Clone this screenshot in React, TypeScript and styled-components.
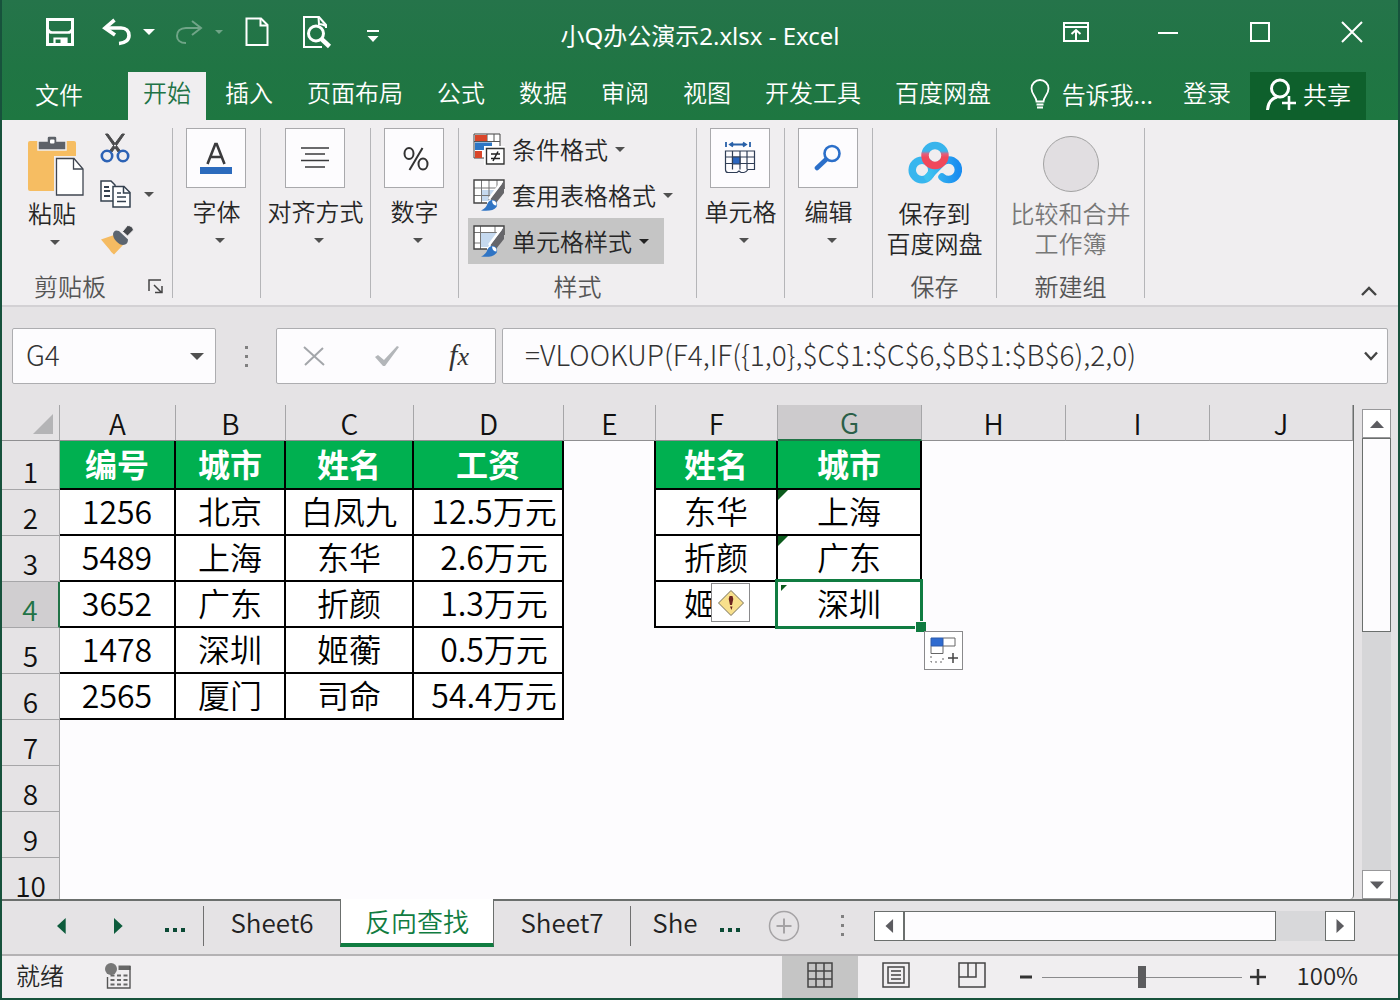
import React, { useState } from "react";
import styled, { createGlobalStyle, css } from "styled-components";

const FONT = '"Noto Sans CJK SC", "Noto Sans", sans-serif';

const C = {
  green: "#217346",
  accent: "#107c41",
  header: "#00b050",
  frame: "#17523c",
  ribbon: "#f0eef0",
  chrome: "#e5e3e5",
  pressed: "#c5c5c5",
  sheet: "#fdfcfe",
  line: "#a6a6a8",
  edge: "#6b6f6d",
  text: "#262626",
  muted: "#777777",
};

const GlobalStyle = createGlobalStyle`
  *, *::before, *::after { box-sizing: border-box; }
  body { margin: 0; background: ${C.chrome}; font-family: ${FONT}; font-weight: 350; color: ${C.text}; }
  button, input { font: inherit; color: inherit; margin: 0; }
  button { padding: 0; border: 0; background: none; }
  svg { display: block; flex: none; }
`;

const Window = styled.div`
  display: flex;
  flex-direction: column;
  height: 100vh;
  min-width: 1200px;
  overflow: hidden;
  border: 2px solid ${C.frame};
  border-top: 0;
`;

/* ---------- title bar and ribbon tabs ---------- */

const Header = styled.header`
  color: #fff;
  background: linear-gradient(#25744a, #207544 55%, #1e7741);
`;

const TitleBar = styled.div`
  display: grid;
  grid-template-columns: 1fr auto 1fr;
  align-items: center;
  height: 72px;
  padding-bottom: 8px;
`;

const QuickBar = styled.div`
  display: flex;
  align-items: center;
  padding-left: 42px;
`;

const QuickButton = styled.button<{ $w: number; $gap?: number; $dim?: boolean }>`
  display: flex;
  align-items: center;
  justify-content: center;
  width: ${(p) => p.$w}px;
  height: 40px;
  margin-right: ${(p) => p.$gap ?? 0}px;
  opacity: ${(p) => (p.$dim ? 0.35 : 1)};
`;

const Title = styled.h1`
  margin: 8px 0 0;
  font-family: "Noto Sans", "Noto Sans CJK SC", sans-serif;
  font-size: 24px;
  line-height: 32px;
  font-weight: 400;
`;

const WindowButtons = styled.div`
  display: flex;
  justify-content: flex-end;
`;

const WindowButton = styled.button`
  display: flex;
  align-items: center;
  justify-content: center;
  width: 92px;
  height: 40px;
`;

const TabRow = styled.nav`
  display: flex;
  align-items: stretch;
  gap: 4px;
  height: 48px;
  padding: 0 32px 0 18px;
`;

const Tab = styled.button<{ $active?: boolean; $file?: boolean }>`
  padding: 0 15px ${(p) => (p.$file ? 4 : 8)}px;
  font-size: 24px;
  line-height: 40px;
  white-space: nowrap;
  margin-right: ${(p) => (p.$file ? 26 : 0)}px;
  ${(p) => p.$active && css`color: ${C.green}; background: ${C.ribbon};`}
`;

const Spacer = styled.div`
  flex: 1;
`;

const TellMe = styled(Tab)`
  display: flex;
  align-items: center;
  gap: 12px;
  margin-left: auto;
  padding: 0 11px 4px 15px;
`;

const Share = styled(Tab)`
  display: flex;
  align-items: center;
  gap: 6px;
  padding: 0 15px 4px;
  background: #0e602c;
`;

/* ---------- ribbon ---------- */

const Ribbon = styled.section`
  position: relative;
  display: flex;
  height: 187px;
  padding: 8px 0;
  background: ${C.ribbon};
  border-bottom: 2px solid #d3d1d4;
`;

const Group = styled.div<{ $w: number }>`
  display: flex;
  flex-direction: column;
  align-items: center;
  width: ${(p) => p.$w}px;
  height: 170px;
  border-right: 1px solid #b5b5b8;
`;

const GroupBody = styled.div`
  display: flex;
  flex: 1;
  justify-content: center;
  width: 100%;
`;

const Caption = styled.div`
  display: flex;
  align-items: center;
  justify-content: center;
  width: 100%;
  height: 24px;
  font-size: 24px;
  line-height: 24px;
  color: #555;
`;

const ClipCaption = styled(Caption)`
  justify-content: space-between;
  padding: 0 8px 0 32px;
`;

const BigButton = styled.button<{ $dim?: boolean; $inset?: number }>`
  display: flex;
  flex-direction: column;
  align-items: center;
  align-self: flex-start;
  padding-top: ${(p) => p.$inset ?? 0}px;
  font-size: 24px;
  line-height: 30px;
  white-space: nowrap;
  color: ${(p) => (p.$dim ? C.muted : C.text)};
`;

const Tile = styled.span`
  display: flex;
  align-items: center;
  justify-content: center;
  width: 60px;
  height: 60px;
  margin: 0 2px 8px 0;
  background: ${C.sheet};
  border: 1px solid #a9a9ac;
`;

const LogoSlot = styled.span`
  display: flex;
  align-items: center;
  justify-content: center;
  height: 64px;
  margin-bottom: 2px;
`;

const Disc = styled.span`
  width: 56px;
  height: 56px;
  border-radius: 50%;
  background: #e1dee1;
  border: 1px solid #a2a2a2;
`;

const Arrow = styled.span<{ $top?: number; $left?: number; $size?: number; $color?: string }>`
  width: 0;
  height: 0;
  margin-top: ${(p) => p.$top ?? 0}px;
  margin-left: ${(p) => p.$left ?? 0}px;
  border: ${(p) => p.$size ?? 5}px solid transparent;
  border-top-color: ${(p) => p.$color ?? "#505050"};
  border-bottom: 0;
`;

const Clipboard = styled.div`
  display: flex;
  width: 100%;
  padding-left: 26px;
`;

const PasteButton = styled(BigButton)`
  width: 56px;
  padding-top: 8px;
`;

const PasteLabel = styled.span`
  display: flex;
  flex-direction: column;
  align-items: center;
  width: 48px;
  margin: 2px 8px 0 0;
`;

const SmallTools = styled.div`
  display: flex;
  flex-direction: column;
  gap: 12px;
  margin: 3px 0 0 16px;
`;

const SmallTool = styled.button`
  display: flex;
  align-items: center;
  gap: 12px;
  height: 34px;
`;

const StyleList = styled.div`
  display: flex;
  flex-direction: column;
  align-items: flex-start;
  width: 100%;
  padding-left: 9px;
  margin-top: -2px;
`;

const StyleButton = styled.button<{ $on?: boolean }>`
  display: flex;
  align-items: center;
  gap: 7px;
  height: 46px;
  padding: 0 15px 0 5px;
  font-size: 24px;
  line-height: 24px;
  white-space: nowrap;
  background: ${(p) => (p.$on ? C.pressed : "transparent")};
`;

const Collapse = styled.button`
  align-self: flex-end;
  margin: 0 20px 0 auto;
`;

/* ---------- formula bar ---------- */

const FormulaBar = styled.section`
  display: flex;
  align-items: center;
  height: 98px;
  padding: 0 10px;
  background: ${C.chrome};
`;

const Field = styled.div<{ $w?: number }>`
  display: flex;
  align-items: center;
  ${(p) => (p.$w ? css`width: ${p.$w}px;` : css`flex: 1;`)}
  height: 56px;
  background: ${C.sheet};
  border: 1px solid #adadb0;
  border-radius: 2px;
`;

const FieldInput = styled.input<{ $pad: number }>`
  flex: 1;
  min-width: 0;
  height: 100%;
  padding: 0 0 4px ${(p) => p.$pad}px;
  border: 0;
  outline: 0;
  background: transparent;
  font-size: 28px;
  font-weight: 300;
  color: #333;
`;

const FieldButton = styled.button<{ $w: number }>`
  display: flex;
  align-items: center;
  justify-content: center;
  width: ${(p) => p.$w}px;
  height: 100%;
`;

const FormulaTools = styled(Field)`
  margin-right: 6px;
`;

const Dots = styled.div<{ $w: number }>`
  display: flex;
  flex-direction: column;
  align-items: center;
  gap: 6px;
  width: ${(p) => p.$w}px;
  &::before, &::after, & > i { content: ""; width: 3px; height: 3px; background: #808080; }
`;

/* ---------- worksheet ---------- */

const Sheet = styled.main`
  display: flex;
  flex: 1;
  min-height: 0;
  background: ${C.chrome};
`;

const Pane = styled.div`
  position: relative;
  flex: 1;
  min-width: 0;
  overflow: hidden;
  border-right: 1px solid ${C.edge};
  border-radius: 0 0 4px 0;
  background: ${C.sheet};
`;

const Grid = styled.table`
  width: 100%;
  table-layout: fixed;
  border-collapse: separate;
  border-spacing: 0;
`;

const ColHead = styled.th<{ $on?: boolean }>`
  height: 36px;
  padding: 0;
  font-size: 28px;
  line-height: 34px;
  font-weight: 350;
  vertical-align: bottom;
  color: ${(p) => (p.$on ? "#2b5f48" : "#111")};
  background: ${(p) => (p.$on ? "#cdcbcd" : C.chrome)};
  border-right: 1px solid ${C.line};
  border-bottom: ${(p) => (p.$on ? `2px solid ${C.green}` : "1px solid #8f8f91")};
`;

const Corner = styled(ColHead)`
  & > span {
    display: block;
    width: 0;
    height: 0;
    margin: 0 6px 6px auto;
    border: 10px solid #b4b4b6;
    border-top-color: transparent;
    border-left-color: transparent;
  }
`;

const RowHead = styled.th<{ $on?: boolean }>`
  height: 46px;
  padding: 0 0 2px;
  font-size: 28px;
  line-height: 32px;
  font-weight: 350;
  vertical-align: bottom;
  color: ${(p) => (p.$on ? C.green : "#111")};
  background: ${(p) => (p.$on ? "#d0ced0" : C.chrome)};
  border-bottom: 1px solid ${C.line};
  border-right: ${(p) => (p.$on ? `2px solid ${C.green}` : `1px solid ${C.line}`)};
`;

const Row = styled.tr<{ $first?: boolean }>`
  height: ${(p) => (p.$first ? 49 : 46)}px;
`;

const Cell = styled.td<{ $kind: "blank" | "edge" | "head" | "data" | "money" }>`
  position: relative;
  padding: 0 0 4px;
  font-size: 32px;
  line-height: 40px;
  text-align: center;
  vertical-align: middle;
  white-space: nowrap;
  color: #000;
  ${(p) => p.$kind === "edge" && css`border-right: 2px solid #000;`}
  ${(p) =>
    (p.$kind === "data" || p.$kind === "money" || p.$kind === "head") &&
    css`
      border-right: 2px solid #000;
      border-bottom: 2px solid #000;
      background: #fff;
    `}
  ${(p) => p.$kind === "head" && css`background: ${C.header}; color: #fff; font-weight: 700;`}
  ${(p) => p.$kind === "money" && css`padding-left: 12px;`}
`;

const ErrorMark = styled.span<{ $small?: boolean }>`
  position: absolute;
  top: ${(p) => (p.$small ? 3 : 0)}px;
  left: ${(p) => (p.$small ? 3 : 0)}px;
  border: ${(p) => (p.$small ? 3 : 5)}px solid #0b5a1c;
  border-right-color: transparent;
  border-bottom-color: transparent;
`;

const Selection = styled.span`
  position: absolute;
  inset: -3px;
  border: 3px solid ${C.accent};
  &::after {
    content: "";
    position: absolute;
    right: -6px;
    bottom: -6px;
    width: 11px;
    height: 11px;
    background: ${C.accent};
    border: solid #fff;
    border-width: 1px 0 0 1px;
  }
`;

const FloatButton = styled.button<{ $x: number; $y: number }>`
  position: absolute;
  left: ${(p) => p.$x}px;
  top: ${(p) => p.$y}px;
  z-index: 2;
  display: flex;
  align-items: center;
  justify-content: center;
  width: 39px;
  height: 39px;
  background: #fff;
  border: 1px solid #8a8a8c;
`;

const VScroll = styled.div`
  display: flex;
  flex-direction: column;
  width: 29px;
  margin: 4px 7px 0 8px;
  background: #d6d6d8;
`;

const ScrollButton = styled.button`
  display: flex;
  align-items: center;
  justify-content: center;
  width: 30px;
  height: 30px;
  background: #fff;
  border: 1px solid ${C.edge};
`;

const VScrollButton = styled(ScrollButton)`
  width: 29px;
  height: 29px;
  border-color: #98989a;
`;

const Thumb = styled.div<{ $share: number }>`
  flex: ${(p) => p.$share};
  border: 1px solid ${C.edge};
  background: ${C.sheet};
`;

const Track = styled.div<{ $share: number }>`
  flex: ${(p) => p.$share};
`;

/* ---------- sheet tabs ---------- */

const SheetBar = styled.nav`
  display: flex;
  height: 57px;
  background: ${C.chrome};
  border-bottom: 2px solid #b4b2b4;
`;

const TabStrip = styled.div`
  display: flex;
  align-items: center;
  padding: 0 0 4px 30px;
  border-top: 2px solid ${C.edge};
`;

const NavButton = styled.button<{ $w: number }>`
  display: flex;
  align-items: center;
  justify-content: center;
  width: ${(p) => p.$w}px;
  height: 46px;
`;

const More = styled.button<{ $w: number }>`
  display: flex;
  justify-content: center;
  gap: 4px;
  width: ${(p) => p.$w}px;
  padding-top: 8px;
  & > i { width: 4px; height: 4px; background: #0b4a35; }
`;

const Divider = styled.span`
  width: 1px;
  height: 40px;
  background: #707070;
`;

const SheetTab = styled.button<{ $w: number; $active?: boolean }>`
  width: ${(p) => p.$w}px;
  height: 48px;
  padding-bottom: 8px;
  font-size: 26px;
  line-height: 32px;
  white-space: nowrap;
  overflow: hidden;
  color: #222;
  ${(p) =>
    p.$active &&
    css`
      color: ${C.accent};
      padding-bottom: 0;
      background: #fff;
      border: solid ${C.edge};
      border-width: 0 1px;
      border-bottom: 4px solid ${C.accent};
    `}
`;

const SheetTail = styled.div`
  display: flex;
  flex: 1;
  align-items: center;
  padding: 0 43px 4px 0;
  border-top: 2px solid ${C.edge};
`;

const AddSheet = styled.button`
  display: flex;
  margin: 0 25px 0 27px;
`;

const HScroll = styled.div`
  display: flex;
  flex: 1;
  margin-left: 15px;
  background: #d8d8da;
`;

/* ---------- status bar ---------- */

const StatusBar = styled.footer`
  display: flex;
  align-items: center;
  height: 42px;
  padding-right: 40px;
  background: ${C.ribbon};
  font-size: 24px;
  line-height: 32px;
`;

const Ready = styled.span`
  margin: 0 41px 4px 14px;
`;

const ViewButton = styled.button<{ $on?: boolean }>`
  display: flex;
  align-items: center;
  justify-content: center;
  width: 76px;
  height: 100%;
  padding-bottom: 4px;
  background: ${(p) => (p.$on ? C.pressed : "transparent")};
`;

const ZoomButton = styled.button`
  display: flex;
  justify-content: center;
  width: 32px;
`;

const ZoomSlider = styled.input`
  appearance: none;
  width: 200px;
  height: 24px;
  background: linear-gradient(#8a8a8c, #8a8a8c) center / 100% 1px no-repeat;
  &::-webkit-slider-thumb {
    appearance: none;
    width: 8px;
    height: 22px;
    background: #5c5c5e;
  }
`;

const ZoomText = styled.button`
  margin: 0 0 4px 23px;
`;

/* ---------- drawings ---------- */

const SaveIcon = () => (
  <svg width="28" height="28" viewBox="0 0 28 28" fill="none" stroke="#fff" strokeWidth="3">
    <path d="M1.500 1.500h25v25h-25z" />
    <path d="M2 11.500q1 3 4 3h16q3 0 4-3" strokeWidth="2.600" />
    <path d="M8.500 27v-6.500h12v6.500" strokeWidth="2.200" />
    <path d="M14.500 21h6v6h-6z" fill="#fff" stroke="none" />
  </svg>
);
const UndoIcon = () => (
  <svg width="30" height="28" viewBox="0 0 30 28" fill="none" stroke="#fff" strokeWidth="3.600">
    <path d="M12.500 2 3 10l10 7" />
    <path d="M3 10h16c5 0 8 3.200 8 7.500s-3.500 7.500-10 8" />
  </svg>
);
const RedoIcon = () => (
  <svg width="30" height="28" viewBox="0 0 30 28" fill="none" stroke="#fff" strokeWidth="2">
    <path d="M18 3l9 7-9 7" />
    <path d="M27 10H12c-6 0-9 3.500-9 8 0 4 3 7 9 7" />
  </svg>
);
const PageIcon = () => (
  <svg width="24" height="30" viewBox="0 0 24 30" fill="none" stroke="#fff" strokeWidth="2">
    <path d="M1.500 1.500H16L22.500 8v20h-21z" />
    <path d="M15.500 2v6.500H22" />
  </svg>
);
const PreviewIcon = () => (
  <svg width="30" height="34" viewBox="0 0 30 34" fill="none" stroke="#fff" strokeWidth="2">
    <path d="M20 32H2V2h15l7 8v3" />
    <path d="M16.500 2.500 17 9q3 0 7 2" />
    <circle cx="14" cy="18.500" r="7.500" strokeWidth="3" />
    <path d="m19.500 24 8 7.500" strokeWidth="4.500" />
  </svg>
);
const CustomizeIcon = () => (
  <svg width="12" height="20" viewBox="0 -4 12 20" fill="#fff">
    <path d="M0 4h12v2H0zM.5 10h11L6 16z" />
  </svg>
);
const RibbonIcon = () => (
  <svg width="28" height="22" viewBox="0 0 28 22" fill="none" stroke="#fff" strokeWidth="2">
    <path d="M2 2h24v18H2zM2 6h24" />
    <path d="M14 19V9M9.500 13l4.500-4 4.500 4" />
  </svg>
);
const MinIcon = () => (
  <svg width="22" height="22" viewBox="0 0 22 22" stroke="#fff" strokeWidth="2"><path d="M1 12h20" /></svg>
);
const MaxIcon = () => (
  <svg width="22" height="22" viewBox="0 0 22 22" fill="none" stroke="#fff" strokeWidth="2"><path d="M2 2h18v18H2z" /></svg>
);
const CloseIcon = () => (
  <svg width="22" height="22" viewBox="0 0 22 22" stroke="#fff" strokeWidth="2"><path d="m1 1 20 20M21 1 1 21" /></svg>
);
const BulbIcon = () => (
  <svg width="20" height="30" viewBox="0 0 20 30" fill="none" stroke="#fff" strokeWidth="1.800">
    <path d="M6.500 22.500c0-5-5-7-5-13a8.500 8.500 0 0 1 17 0c0 6-5 8-5 13z" />
    <path d="M6.500 25.500h7M7 28.500h6" />
  </svg>
);
const PersonIcon = () => (
  <svg width="32" height="34" viewBox="0 0 32 34" fill="none" stroke="#fff" strokeWidth="3">
    <circle cx="15" cy="11.500" r="8.500" />
    <path d="M2.500 33c.5-7 4-11.500 9.500-13" />
    <path d="M24 19v14M17 26h14" strokeWidth="2.600" />
  </svg>
);
const PasteIcon = () => (
  <svg width="56" height="60" viewBox="0 0 56 60">
    <rect x="0" y="5" width="48" height="50" rx="2" fill="#f6bd62" />
    <path d="M10 14V5h9V2q0-2 2-2h6q2 0 2 2v3h9v9z" fill="#5d6168" stroke={C.ribbon} strokeWidth="1.500" />
    <rect x="22" y="3.500" width="4.500" height="4" rx="1" fill="#fff" />
    <path d="M26 20h30v40H26z" fill={C.ribbon} />
    <path d="M28.500 22.500H46L55 33v26H28.500z" fill="#fff" stroke="#3f4550" strokeWidth="1.300" />
    <path d="M45.500 23v10H55" fill="none" stroke="#3f4550" strokeWidth="1.300" />
  </svg>
);
const CutIcon = () => (
  <svg width="30" height="32" viewBox="0 0 30 32" fill="none">
    <path d="M5.500 2 18 20l2.500-1L8 2zM24.500 2 12 20l-2.500-1L22 2z" fill="#4a4a4c" stroke="#4a4a4c" />
    <circle cx="7" cy="24" r="5.200" stroke="#2c62b5" strokeWidth="2.600" />
    <circle cx="23" cy="24" r="5.200" stroke="#2c62b5" strokeWidth="2.600" />
  </svg>
);
const CopyIcon = () => (
  <svg width="32" height="30" viewBox="0 0 32 30" fill="#fff" stroke="#35414f" strokeWidth="1.500">
    <path d="M1 2h10l4 4v16H1z" />
    <path d="M4 8h5M4 12h6M4 17h6" strokeWidth="1.800" />
    <path d="M13 7.500h11l6 6V28H13z" />
    <path d="M23.500 8v6H30M17 14h4M17 18h9M17 22.500h9" fill="none" strokeWidth="1.500" />
  </svg>
);
const BrushIcon = () => (
  <svg width="34" height="30" viewBox="0 0 34 30">
    <path d="M1 14.500 14 10l9 10-9 9.500q-3-2-4.500-5z" fill="#f5bb62" />
    <path d="M13 9q1-5 6-3l9 8.500q0 5-5 5.500-3 0-6.500-3.500T13 9z" fill="#5c6570" />
    <path d="m22.500 6.500 5-6q5 0 6 4.500l-6 6z" fill="#46494e" stroke={C.ribbon} />
  </svg>
);
const FontIcon = () => (
  <svg width="34" height="34" viewBox="0 0 34 34">
    <path d="M8.500 23 16.300 3h1.400L25.500 23M11.500 16h11" fill="none" stroke="#3b3b3d" strokeWidth="2.600" />
    <path d="M1 26h32v7H1z" fill="#2c6bbd" />
  </svg>
);
const AlignIcon = () => (
  <svg width="30" height="24" viewBox="0 0 30 24" stroke="#3a3a3c" strokeWidth="1.600">
    <path d="M1 2h28M5 8h20M1 14.500h28M5 21h20" />
  </svg>
);
const PercentIcon = () => (
  <svg width="32" height="26" viewBox="-2 0 32 26" fill="none" stroke="#333" strokeWidth="2">
    <ellipse cx="9" cy="8.500" rx="4.500" ry="5.500" />
    <ellipse cx="23" cy="19" rx="4.500" ry="5.500" />
    <path d="M22.500 3 9.500 25" />
  </svg>
);
const CondIcon = () => (
  <svg width="32" height="32" viewBox="0 0 32 32">
    <path d="M1 1h26v24H1z" fill="#fff" stroke="#444" />
    <path d="M1 8.500h26M14 1v8M21 1v8" stroke="#555" />
    <path d="M2 2h12v6H2zM2 18h7v7H2z" fill="#d9462a" />
    <path d="M2 9.500h17V13l-6 4H2z" fill="#2d76c4" />
    <path d="M11 13h21v19H11z" fill="#fff" />
    <path d="M13.500 15.500h17.500v15.500H13.500z" fill="#fff" stroke="#333" strokeWidth="1.400" />
    <path d="M18 21h9M18 25.500h9M25 18.500l-5 9.500" stroke="#222" strokeWidth="1.500" />
  </svg>
);
const TableStyleIcon = ({ cell }: { cell?: boolean }) => (
  <svg width="32" height="32" viewBox="0 0 32 32">
    <path d="M1 1h30v9L20 24H1z" fill="#fff" />
    <path d={cell ? "M8 8h17l-10 14H8z" : "M9 11h15l-8 11H9z"} fill="#c5d9ef" />
    <path d={cell ? "M7.500 1v23M1 7.500h25M22 1v6M1 18h6" : "M8.500 1v23M16 1v20M24 1v9M1 9h24M1 16.500h19"} stroke="#777" fill="none" />
    <path d="M31 10V1H1v23h13" fill="none" stroke="#444" strokeWidth="1.400" />
    <path d="M31 2v12l-8 10-6-4z" fill="#66666a" />
    <path d="M28 4 16 20" stroke="#fff" strokeWidth="2.500" />
    <path d="M8 31.500q5-2 6.500-7 2.500-4.500 7-3.500 4 3 2 7-4 5-15.500 3.500z" fill="#2f74c4" />
    <path d="M19 21.500q5 0 4.500 5-4 0-4.500-5z" fill="#fff" />
  </svg>
);
const CellsIcon = () => (
  <svg width="32" height="34" viewBox="0 0 32 34" fill="none" stroke="#2f3d55" strokeWidth="1.200">
    <path d="M2 1v5M26 1v5" stroke="#2860a8" strokeWidth="1.800" />
    <path d="M6.500 3.500h15M9 1.500l-3 2 3 2M19 1.500l3 2-3 2" stroke="#2860a8" strokeWidth="1.800" />
    <path d="M1.500 10h29v18.500H24q-2 3-4 3h-3l-2-1.500-2 1.500H4q-2.500 0-2.500-3zM1.500 16h29M1.500 22.500h29M8.500 10v18.500M16 10v18.500M23 10v18.500" />
    <path d="M8.500 16H16v7H8.500z" fill="#2b66c0" />
  </svg>
);
const FindIcon = () => (
  <svg width="28" height="28" viewBox="0 0 28 28" fill="none" stroke="#2b6fc9">
    <circle cx="18" cy="9.500" r="7.500" strokeWidth="2.600" />
    <path d="M12 15.500 3 24" strokeWidth="4.600" strokeLinecap="round" />
  </svg>
);
const CloudIcon = () => (
  <svg width="54" height="46" viewBox="0 0 54 46" fill="none" strokeWidth="7.500">
    <defs>
      <linearGradient id="right" x1="0" x2="1" y1="0" y2="0">
        <stop offset="0" stopColor="#3fc3ef" />
        <stop offset="1" stopColor="#1a8df0" />
      </linearGradient>
      <linearGradient id="top" x1="0" x2="0" y1="0" y2="1">
        <stop offset="0.280" stopColor="#38b4ec" />
        <stop offset="0.420" stopColor="#e0607f" />
        <stop offset="0.600" stopColor="#f0485c" />
      </linearGradient>
    </defs>
    <circle cx="14" cy="29" r="9.800" stroke="#38b6ee" />
    <path d="M34 36a9.800 9.800 0 1 0 0-14.500L20 36" stroke="url(#right)" strokeLinecap="round" />
    <circle cx="27" cy="14.500" r="10" stroke="url(#top)" />
  </svg>
);
const LauncherIcon = () => (
  <svg width="16" height="16" viewBox="0 0 16 16" fill="none" stroke="#444" strokeWidth="1.500">
    <path d="M1 13V2h12M6 7l7 7M14 8v6.500H7" />
  </svg>
);
const ChevronIcon = ({ up }: { up?: boolean }) => (
  <svg width="18" height="12" viewBox="0 0 18 12" fill="none" stroke="#444" strokeWidth="2.400">
    <path d={up ? "M2 10l7-7 7 7" : "M3 2.500l6 6.500 6-6.500"} />
  </svg>
);
const CancelIcon = () => (
  <svg width="22" height="20" viewBox="0 0 22 20" stroke="#a3a6aa" strokeWidth="2"><path d="M1 1l20 18M20 2 2 19" /></svg>
);
const AcceptIcon = () => (
  <svg width="26" height="22" viewBox="0 0 26 22" fill="#b3b6b9"><path d="M1 12l3-2 6 5L23 1l2 1-14 19H9z" /></svg>
);
const Fx = styled.span`
  font-family: "Liberation Serif", serif;
  font-size: 30px;
  line-height: 30px;
  font-style: italic;
  font-weight: 400;
  color: #333;
  & > small { font-size: 26px; }
`;
const Triangle = ({ dir, color = "#5c5c60", size = 12 }: { dir: "up" | "down" | "left" | "right"; color?: string; size?: number }) => {
  const d = { up: "M0 9.500h12L6 3z", down: "M0 3h12L6 9.500z", left: "M9.500 0v12L3 6z", right: "M3 0v12l6.500-6z" }[dir];
  return <svg width={size} height={size} viewBox="0 0 12 12"><path d={d} fill={color} /></svg>;
};
const WarnIcon = () => (
  <svg width="28" height="28" viewBox="0 0 28 28">
    <path d="M14 1.500 26.500 14 14 26.500 1.500 14z" fill="#f8e08c" stroke="#77705a" />
    <path d="M12.500 7h3l.8 3-1.300 6h-2l-1.300-6z" fill="#6b2320" />
    <path d="M13 17.500h2.500L14.500 21z" fill="#6b2320" />
  </svg>
);
const FillIcon = () => (
  <svg width="30" height="30" viewBox="0 0 30 30" fill="none" stroke="#666">
    <path d="M2 2h12v8H2z" fill="#2f6bd0" stroke="#2f5ba8" />
    <path d="M14 2h12v8H14M2 10v7.500h12V10" />
    <path d="M2 20v6h12v-6" strokeDasharray="2 3" />
    <path d="M24 17v10M19 22h10" stroke="#444" strokeWidth="1.500" />
  </svg>
);
const AddIcon = () => (
  <svg width="32" height="32" viewBox="0 0 32 32" fill="none" stroke="#a5a3a5">
    <circle cx="16" cy="16" r="14.500" strokeWidth="1.500" />
    <path d="M16 8.500v15M8.500 16h15" strokeWidth="2" />
  </svg>
);
const MacroIcon = () => (
  <svg width="26" height="28" viewBox="0 0 26 28">
    <circle cx="6" cy="6" r="6" fill="#777" />
    <path d="M13.500 2.500h12V7h-12z" fill="#666" />
    <path d="M2.500 14v11h22.500V3" fill="none" stroke="#555" strokeWidth="1.400" />
    <path d="M5.500 12.500h17M5.500 17h17M5.500 21.500h17" stroke="#666" strokeWidth="2" strokeDasharray="4 2.500" />
  </svg>
);
const NormalIcon = () => (
  <svg width="26" height="26" viewBox="0 0 26 26" fill="none" stroke="#444" strokeWidth="1.500">
    <path d="M1 1h24v24H1zM1 9h24M1 17h24M9 1v24M17 1v24" />
  </svg>
);
const LayoutIcon = () => (
  <svg width="28" height="26" viewBox="0 0 28 26" fill="none" stroke="#444" strokeWidth="1.500">
    <path d="M1 1h26v24H1zM6 5h16v16H6zM9 9h10M9 13h10M9 17h10" />
  </svg>
);
const BreakIcon = () => (
  <svg width="28" height="26" viewBox="0 0 28 26" fill="none" stroke="#444" strokeWidth="1.500">
    <path d="M1 1h26v24H1zM1 15h17V1M10 1v14" />
  </svg>
);

/* ---------- data ---------- */

const TABS = ["插入", "页面布局", "公式", "数据", "审阅", "视图", "开发工具", "百度网盘"];
const COLS = ["A", "B", "C", "D", "E", "F", "G", "H", "I", "J"];
const WIDTHS = [58, 116, 110, 128, 150, 92, 122, 144, 144, 144];
const ROWS: string[][] = [
  ["编号", "城市", "姓名", "工资", "", "姓名", "城市"],
  ["1256", "北京", "白凤九", "12.5万元", "", "东华", "上海"],
  ["5489", "上海", "东华", "2.6万元", "", "折颜", "广东"],
  ["3652", "广东", "折颜", "1.3万元", "", "姬蘅", "深圳"],
  ["1478", "深圳", "姬蘅", "0.5万元"],
  ["2565", "厦门", "司命", "54.4万元"],
  [], [], [], [],
];

const kindOf = (r: number, c: number) => {
  const row = ROWS[r];
  if (c === 4 && row.length > 5) return "edge" as const;
  if (!row[c]) return "blank" as const;
  if (r === 0) return "head" as const;
  return c === 3 ? ("money" as const) : ("data" as const);
};

const TileButton = ({ label, icon }: { label: string; icon: React.ReactNode }) => (
  <BigButton>
    <Tile>{icon}</Tile>
    {label}
    <Arrow $top={12} $left={6} />
  </BigButton>
);

export default function App() {
  const [formula, setFormula] = useState("=VLOOKUP(F4,IF({1,0},$C$1:$C$6,$B$1:$B$6),2,0)");
  const [cellName, setCellName] = useState("G4");
  const [zoom, setZoom] = useState(50);

  return (
    <Window>
      <GlobalStyle />
      <Header>
        <TitleBar>
          <QuickBar>
            <QuickButton $w={32} $gap={25} aria-label="保存"><SaveIcon /></QuickButton>
            <QuickButton $w={32} $gap={8} aria-label="撤消"><UndoIcon /></QuickButton>
            <QuickButton $w={16} $gap={16} aria-label="撤消列表"><Arrow $size={6} $color="#fff" /></QuickButton>
            <QuickButton $w={32} $gap={6} $dim aria-label="恢复"><RedoIcon /></QuickButton>
            <QuickButton $w={16} $gap={16} $dim aria-label="恢复列表"><Arrow $size={4} $color="#fff" /></QuickButton>
            <QuickButton $w={28} $gap={30} aria-label="新建"><PageIcon /></QuickButton>
            <QuickButton $w={32} $gap={32} aria-label="打印预览"><PreviewIcon /></QuickButton>
            <QuickButton $w={16} aria-label="自定义快速访问工具栏"><CustomizeIcon /></QuickButton>
          </QuickBar>
          <Title>小Q办公演示2.xlsx - Excel</Title>
          <WindowButtons>
            <WindowButton aria-label="功能区显示选项"><RibbonIcon /></WindowButton>
            <WindowButton aria-label="最小化"><MinIcon /></WindowButton>
            <WindowButton aria-label="最大化"><MaxIcon /></WindowButton>
            <WindowButton aria-label="关闭"><CloseIcon /></WindowButton>
          </WindowButtons>
        </TitleBar>
        <TabRow>
          <Tab $file>文件</Tab>
          <Tab $active>开始</Tab>
          {TABS.map((t) => <Tab key={t}>{t}</Tab>)}
          <TellMe><BulbIcon />告诉我...</TellMe>
          <Tab>登录</Tab>
          <Share><PersonIcon />共享</Share>
        </TabRow>
      </Header>

      <Ribbon>
        <Group $w={171}>
          <GroupBody>
            <Clipboard>
              <PasteButton>
                <PasteIcon />
                <PasteLabel>粘贴<Arrow $top={12} $left={6} /></PasteLabel>
              </PasteButton>
              <SmallTools>
                <SmallTool aria-label="剪切"><CutIcon /></SmallTool>
                <SmallTool aria-label="复制"><CopyIcon /><Arrow /></SmallTool>
                <SmallTool aria-label="格式刷"><BrushIcon /></SmallTool>
              </SmallTools>
            </Clipboard>
          </GroupBody>
          <ClipCaption>剪贴板<button aria-label="剪贴板选项"><LauncherIcon /></button></ClipCaption>
        </Group>
        <Group $w={88}><GroupBody><TileButton label="字体" icon={<FontIcon />} /></GroupBody></Group>
        <Group $w={110}><GroupBody><TileButton label="对齐方式" icon={<AlignIcon />} /></GroupBody></Group>
        <Group $w={88}><GroupBody><TileButton label="数字" icon={<PercentIcon />} /></GroupBody></Group>
        <Group $w={238}>
          <StyleList>
            <StyleButton><CondIcon />条件格式<Arrow /></StyleButton>
            <StyleButton><TableStyleIcon />套用表格格式<Arrow /></StyleButton>
            <StyleButton $on><TableStyleIcon cell />单元格样式<Arrow $color="#222" /></StyleButton>
          </StyleList>
          <GroupBody />
          <Caption>样式</Caption>
        </Group>
        <Group $w={88}><GroupBody><TileButton label="单元格" icon={<CellsIcon />} /></GroupBody></Group>
        <Group $w={88}><GroupBody><TileButton label="编辑" icon={<FindIcon />} /></GroupBody></Group>
        <Group $w={124}>
          <GroupBody>
            <BigButton $inset={4}>
              <LogoSlot><CloudIcon /></LogoSlot>
              <span>保存到</span>
              <span>百度网盘</span>
            </BigButton>
          </GroupBody>
          <Caption>保存</Caption>
        </Group>
        <Group $w={148}>
          <GroupBody>
            <BigButton $inset={4} $dim>
              <LogoSlot><Disc /></LogoSlot>
              <span>比较和合并</span>
              <span>工作簿</span>
            </BigButton>
          </GroupBody>
          <Caption>新建组</Caption>
        </Group>
        <Collapse aria-label="折叠功能区"><ChevronIcon up /></Collapse>
      </Ribbon>

      <FormulaBar>
        <Field $w={204}>
          <FieldInput $pad={13} aria-label="名称框" value={cellName} onChange={(e) => setCellName(e.target.value)} />
          <FieldButton $w={36} aria-label="名称列表"><Arrow $size={7} /></FieldButton>
        </Field>
        <Dots $w={60}><i /></Dots>
        <FormulaTools $w={220}>
          <FieldButton $w={73} aria-label="取消"><CancelIcon /></FieldButton>
          <FieldButton $w={73} aria-label="输入"><AcceptIcon /></FieldButton>
          <FieldButton $w={72} aria-label="插入函数"><Fx>f<small>x</small></Fx></FieldButton>
        </FormulaTools>
        <Field>
          <FieldInput $pad={22} aria-label="编辑栏" value={formula} onChange={(e) => setFormula(e.target.value)} />
          <FieldButton $w={32} aria-label="展开编辑栏"><ChevronIcon /></FieldButton>
        </Field>
      </FormulaBar>

      <Sheet>
        <Pane>
          <Grid>
            <colgroup>
              {WIDTHS.map((w, i) => <col key={i} style={{ width: w }} />)}
              <col />
            </colgroup>
            <thead>
              <tr>
                <Corner><span /></Corner>
                {COLS.map((c) => <ColHead key={c} scope="col" $on={c === "G"}>{c}</ColHead>)}
              </tr>
            </thead>
            <tbody>
              {ROWS.map((row, r) => (
                <Row key={r} $first={r === 0}>
                  <RowHead scope="row" $on={r === 3}>{r + 1}</RowHead>
                  {COLS.map((_, c) => (
                    <Cell key={c} $kind={kindOf(r, c)}>
                      {row[c]}
                      {c === 6 && (r === 1 || r === 2) && <ErrorMark />}
                      {c === 6 && r === 3 && (
                        <>
                          <ErrorMark $small />
                          <Selection />
                          <FloatButton $x={-67} $y={1} aria-label="错误检查选项"><WarnIcon /></FloatButton>
                          <FloatButton $x={146} $y={49} aria-label="自动填充选项"><FillIcon /></FloatButton>
                        </>
                      )}
                    </Cell>
                  ))}
                </Row>
              ))}
            </tbody>
          </Grid>
        </Pane>
        <VScroll>
          <VScrollButton aria-label="向上滚动"><Triangle dir="up" size={14} /></VScrollButton>
          <Thumb $share={193} />
          <Track $share={239} />
          <VScrollButton aria-label="向下滚动"><Triangle dir="down" size={14} /></VScrollButton>
        </VScroll>
      </Sheet>

      <SheetBar>
        <TabStrip>
          <NavButton $w={57} aria-label="上一张"><Triangle dir="left" color="#0d5c3c" size={16} /></NavButton>
          <NavButton $w={57} aria-label="下一张"><Triangle dir="right" color="#0d5c3c" size={16} /></NavButton>
          <More $w={57} aria-label="更多工作表"><i /><i /><i /></More>
          <Divider />
          <SheetTab $w={136}>Sheet6</SheetTab>
        </TabStrip>
        <SheetTab $w={154} $active>反向查找</SheetTab>
        <SheetTail>
          <SheetTab $w={136}>Sheet7</SheetTab>
          <Divider />
          <SheetTab $w={88}>She</SheetTab>
          <More $w={22} aria-label="更多工作表"><i /><i /><i /></More>
          <AddSheet aria-label="新工作表"><AddIcon /></AddSheet>
          <Dots $w={34}><i /></Dots>
          <HScroll>
            <ScrollButton aria-label="向左滚动"><Triangle dir="left" size={14} /></ScrollButton>
            <Thumb $share={373} />
            <Track $share={49} />
            <ScrollButton aria-label="向右滚动"><Triangle dir="right" size={14} /></ScrollButton>
          </HScroll>
        </SheetTail>
      </SheetBar>

      <StatusBar>
        <Ready>就绪</Ready>
        <MacroIcon />
        <Spacer />
        <ViewButton $on aria-label="普通"><NormalIcon /></ViewButton>
        <ViewButton aria-label="页面布局视图"><LayoutIcon /></ViewButton>
        <ViewButton aria-label="分页预览"><BreakIcon /></ViewButton>
        <ZoomButton aria-label="缩小"><svg width="16" height="16" viewBox="0 0 16 16"><path d="M2 8h12" stroke="#333" strokeWidth="3" /></svg></ZoomButton>
        <ZoomSlider type="range" aria-label="显示比例" value={zoom} onChange={(e) => setZoom(Number(e.target.value))} />
        <ZoomButton aria-label="放大"><svg width="16" height="16" viewBox="0 0 16 16"><path d="M0 8h16M8 0v16" stroke="#333" strokeWidth="2.500" /></svg></ZoomButton>
        <ZoomText>{zoom * 2}%</ZoomText>
      </StatusBar>
    </Window>
  );
}
